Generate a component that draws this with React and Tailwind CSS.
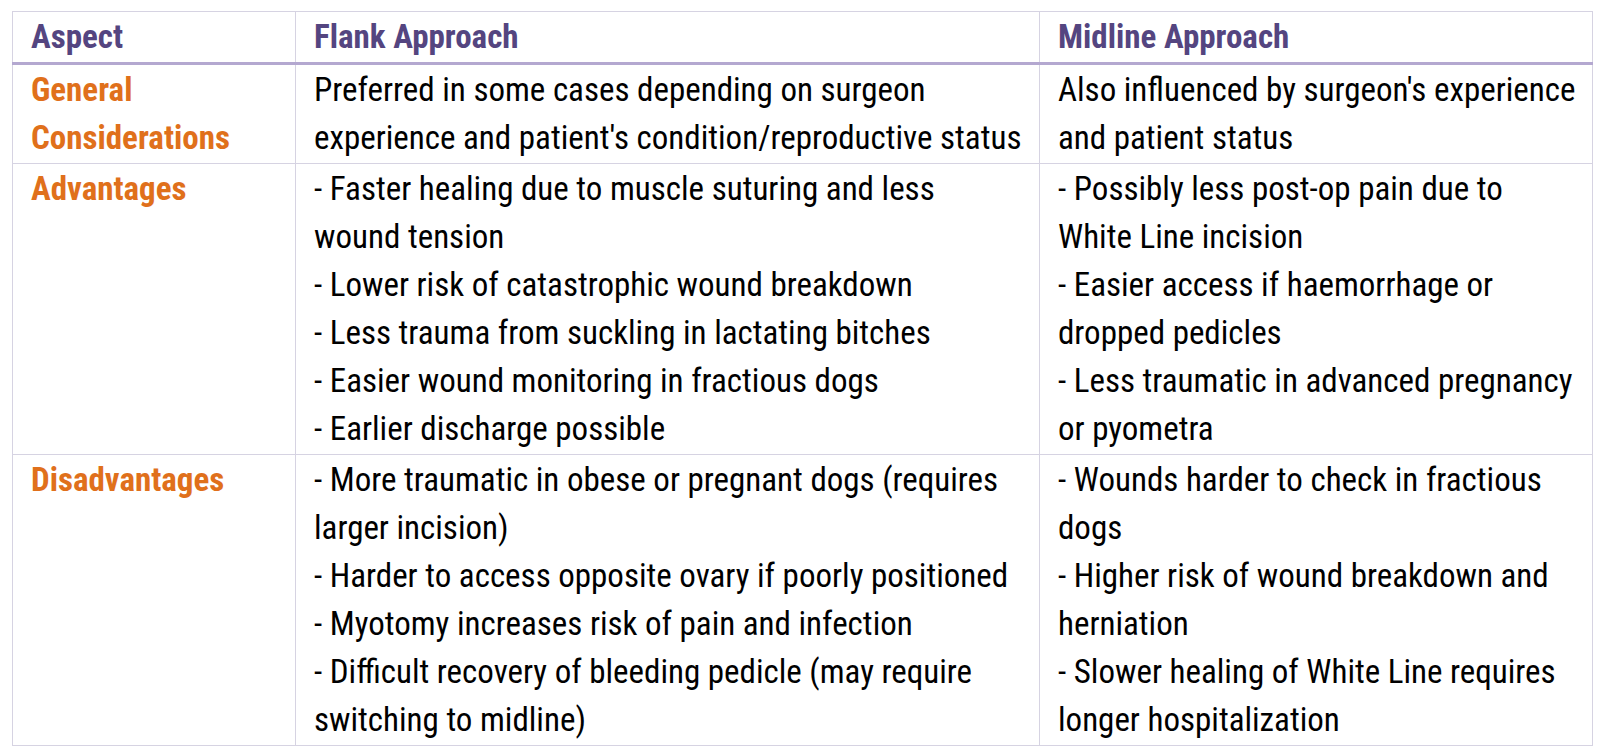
import React from 'react';

const rows = [
  {
    aspect: ['General', 'Considerations'],
    flank: [['Preferred in some cases depending on surgeon', "experience and patient's condition/reproductive status"]],
    midline: [["Also influenced by surgeon's experience", 'and patient status']],
  },
  {
    aspect: ['Advantages'],
    flank: [
      ['- Faster healing due to muscle suturing and less', 'wound tension'],
      ['- Lower risk of catastrophic wound breakdown'],
      ['- Less trauma from suckling in lactating bitches'],
      ['- Easier wound monitoring in fractious dogs'],
      ['- Earlier discharge possible'],
    ],
    midline: [
      ['- Possibly less post-op pain due to', 'White Line incision'],
      ['- Easier access if haemorrhage or', 'dropped pedicles'],
      ['- Less traumatic in advanced pregnancy', 'or pyometra'],
    ],
  },
  {
    aspect: ['Disadvantages'],
    flank: [
      ['- More traumatic in obese or pregnant dogs (requires', 'larger incision)'],
      ['- Harder to access opposite ovary if poorly positioned'],
      ['- Myotomy increases risk of pain and infection'],
      ['- Difficult recovery of bleeding pedicle (may require', 'switching to midline)'],
    ],
    midline: [
      ['- Wounds harder to check in fractious', 'dogs'],
      ['- Higher risk of wound breakdown and', 'herniation'],
      ['- Slower healing of White Line requires', 'longer hospitalization'],
    ],
  },
];

const Lines = ({ items }) => (
  <div>
    {items.map((item, i) => (
      <div key={i}>
        {item.map((line, j) => (
          <div key={j} className="whitespace-nowrap">{line}</div>
        ))}
      </div>
    ))}
  </div>
);

export default function App() {
  return (
    <div className="min-h-screen bg-white pt-[11px] pl-[12px]">
      <table
        className="w-[1581px] border-collapse text-[33px] leading-[48px] text-black"
        style={{ fontFamily: 'Roboto, "Liberation Sans", sans-serif', fontStretch: '75%' }}
      >
        <thead>
          <tr className="border-b-[3px] border-b-[#b4a8d0]">
            <th className="w-[283px] border border-[#d6d3e2] border-b-[#b4a8d0] border-b-[3px] pl-[18px] py-px text-left font-bold text-[#544580]">Aspect</th>
            <th className="w-[744px] border border-[#d6d3e2] border-b-[#b4a8d0] border-b-[3px] pl-[18px] py-px text-left font-bold text-[#544580]">Flank Approach</th>
            <th className="border border-[#d6d3e2] border-b-[#b4a8d0] border-b-[3px] pl-[18px] py-px text-left font-bold text-[#544580]">Midline Approach</th>
          </tr>
        </thead>
        <tbody>
          {rows.map((r) => (
            <tr key={r.aspect.join(' ')}>
              <td className="border border-[#d6d3e2] pl-[18px] py-px align-top font-bold text-[#e0701b]">
                {r.aspect.map((a) => <div key={a}>{a}</div>)}
              </td>
              <td className="border border-[#d6d3e2] pl-[18px] py-px align-top">
                <Lines items={r.flank} />
              </td>
              <td className="border border-[#d6d3e2] pl-[18px] py-px align-top">
                <Lines items={r.midline} />
              </td>
            </tr>
          ))}
        </tbody>
      </table>
    </div>
  );
}
